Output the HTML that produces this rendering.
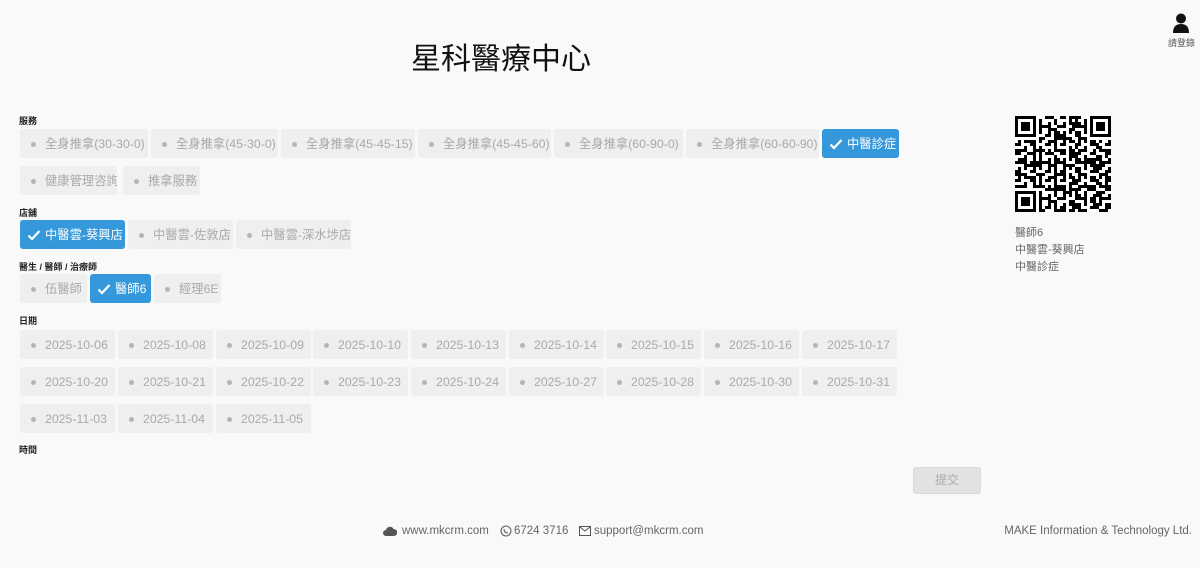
<!DOCTYPE html>
<html><head><meta charset="utf-8"><style>
*{margin:0;padding:0;box-sizing:border-box}
body{width:1200px;height:568px;background:#f9f9f9;font-family:"Liberation Sans","Noto Sans CJK TC",sans-serif;position:relative;overflow:hidden}
.c{position:absolute;height:29px;background:#efefef;border-radius:3px;color:#a9a9a9;font-size:12.3px;line-height:31px;padding-left:25px;white-space:nowrap;overflow:hidden}
.c::before{content:"";position:absolute;left:11px;top:13px;width:5px;height:5px;border-radius:50%;background:#b5b5b5}
.c.s{background:#3498db;color:#fff}
.c.s::before{display:none}
.c.s svg{position:absolute;left:7px;top:9px}
.l{position:absolute;left:19px;font-size:9px;color:#222;font-weight:bold}
.ft{position:absolute;top:525px;font-size:11.5px;color:#666}
</style></head><body>
<div style="position:absolute;left:411px;top:34px;font-size:30px;color:#111;font-family:'Noto Sans CJK TC',sans-serif">星科醫療中心</div>
<svg style="position:absolute;left:1172px;top:13px" width="18" height="20" viewBox="0 0 18 20"><circle cx="9" cy="5.5" r="5" fill="#111"/><path d="M1 20 Q1 11 9 11 Q17 11 17 20Z" fill="#111"/></svg>
<div style="position:absolute;left:1168px;top:36px;font-size:9px;color:#555">請登錄</div>

<div class="l" style="top:114px">服務</div>
<div class="c" style="left:20px;top:129px;width:128px">全身推拿(30-30-0)</div>
<div class="c" style="left:151px;top:129px;width:127px">全身推拿(45-30-0)</div>
<div class="c" style="left:281px;top:129px;width:134px">全身推拿(45-45-15)</div>
<div class="c" style="left:418px;top:129px;width:133px">全身推拿(45-45-60)</div>
<div class="c" style="left:554px;top:129px;width:129px">全身推拿(60-90-0)</div>
<div class="c" style="left:686px;top:129px;width:133px">全身推拿(60-60-90)</div>
<div class="c s" style="left:822px;top:129px;width:77px"><svg width="14" height="12" viewBox="0 0 14 12"><path d="M1.5 6.5l3.5 3.5 7.5-8" stroke="#fff" stroke-width="2.2" fill="none"/></svg>中醫診症</div>
<div class="c" style="left:20px;top:166px;width:97px">健康管理咨詢</div>
<div class="c" style="left:123px;top:166px;width:77px">推拿服務</div>

<div class="l" style="top:206px">店舖</div>
<div class="c s" style="left:20px;top:220px;width:105px"><svg width="14" height="12" viewBox="0 0 14 12"><path d="M1.5 6.5l3.5 3.5 7.5-8" stroke="#fff" stroke-width="2.2" fill="none"/></svg>中醫雲-葵興店</div>
<div class="c" style="left:128px;top:220px;width:105px">中醫雲-佐敦店</div>
<div class="c" style="left:236px;top:220px;width:115px">中醫雲-深水埗店</div>

<div class="l" style="top:260px">醫生 / 醫師 / 治療師</div>
<div class="c" style="left:20px;top:274px;width:67px">伍醫師</div>
<div class="c s" style="left:90px;top:274px;width:61px"><svg width="14" height="12" viewBox="0 0 14 12"><path d="M1.5 6.5l3.5 3.5 7.5-8" stroke="#fff" stroke-width="2.2" fill="none"/></svg>醫師6</div>
<div class="c" style="left:154px;top:274px;width:67px">經理6E</div>

<div class="l" style="top:314px">日期</div>
<div class="c" style="left:20px;top:330px;width:95px">2025-10-06</div>
<div class="c" style="left:118px;top:330px;width:95px">2025-10-08</div>
<div class="c" style="left:216px;top:330px;width:95px">2025-10-09</div>
<div class="c" style="left:313px;top:330px;width:95px">2025-10-10</div>
<div class="c" style="left:411px;top:330px;width:95px">2025-10-13</div>
<div class="c" style="left:509px;top:330px;width:95px">2025-10-14</div>
<div class="c" style="left:606px;top:330px;width:95px">2025-10-15</div>
<div class="c" style="left:704px;top:330px;width:95px">2025-10-16</div>
<div class="c" style="left:802px;top:330px;width:95px">2025-10-17</div>
<div class="c" style="left:20px;top:367px;width:95px">2025-10-20</div>
<div class="c" style="left:118px;top:367px;width:95px">2025-10-21</div>
<div class="c" style="left:216px;top:367px;width:95px">2025-10-22</div>
<div class="c" style="left:313px;top:367px;width:95px">2025-10-23</div>
<div class="c" style="left:411px;top:367px;width:95px">2025-10-24</div>
<div class="c" style="left:509px;top:367px;width:95px">2025-10-27</div>
<div class="c" style="left:606px;top:367px;width:95px">2025-10-28</div>
<div class="c" style="left:704px;top:367px;width:95px">2025-10-30</div>
<div class="c" style="left:802px;top:367px;width:95px">2025-10-31</div>
<div class="c" style="left:20px;top:404px;width:95px">2025-11-03</div>
<div class="c" style="left:118px;top:404px;width:95px">2025-11-04</div>
<div class="c" style="left:216px;top:404px;width:95px">2025-11-05</div>

<div class="l" style="top:443px">時間</div>
<div style="position:absolute;left:913px;top:467px;width:68px;height:27px;background:#e2e2e2;border:1px solid #d9d9d9;border-radius:3px;color:#aaa;font-size:12px;text-align:center;line-height:25px">提交</div>

<svg style="position:absolute;left:1015px;top:116px" width="96" height="96" viewBox="0 0 32 32" shape-rendering="crispEdges">
<defs>
<pattern id="p1" width="5" height="3" patternUnits="userSpaceOnUse"><rect width="2" height="1" fill="#000"/><rect x="3" y="1" width="1" height="2" fill="#000"/><rect x="1" y="2" width="1" height="1" fill="#000"/></pattern>
<pattern id="p2" width="7" height="4" patternUnits="userSpaceOnUse"><rect x="4" width="2" height="1" fill="#000"/><rect x="0" y="3" width="3" height="1" fill="#000"/><rect x="6" y="1" width="1" height="2" fill="#000"/></pattern>
<pattern id="p3" width="11" height="9" patternUnits="userSpaceOnUse"><rect x="2" y="5" width="2" height="2" fill="#000"/><rect x="8" y="2" width="1" height="3" fill="#000"/><rect x="5" y="7" width="3" height="1" fill="#000"/></pattern>
</defs>
<rect width="32" height="32" fill="#fff"/>
<rect width="32" height="32" fill="url(#p1)"/>
<rect width="32" height="32" fill="url(#p2)"/>
<rect width="32" height="32" fill="url(#p3)"/>
<g><rect x="0" y="0" width="8" height="8" fill="#fff"/><rect x="0" y="0" width="7" height="7" fill="#000"/><rect x="1" y="1" width="5" height="5" fill="#fff"/><rect x="2" y="2" width="3" height="3" fill="#000"/></g>
<g><rect x="24" y="0" width="8" height="8" fill="#fff"/><rect x="25" y="0" width="7" height="7" fill="#000"/><rect x="26" y="1" width="5" height="5" fill="#fff"/><rect x="27" y="2" width="3" height="3" fill="#000"/></g>
<g><rect x="0" y="24" width="8" height="8" fill="#fff"/><rect x="0" y="25" width="7" height="7" fill="#000"/><rect x="1" y="26" width="5" height="5" fill="#fff"/><rect x="2" y="27" width="3" height="3" fill="#000"/></g>
</svg>
<div style="position:absolute;left:1015px;top:225px;font-size:11px;color:#666;line-height:17px">醫師6<br>中醫雲-葵興店<br>中醫診症</div>

<svg style="position:absolute;left:383px;top:526px" width="14" height="10" viewBox="0 0 14 10"><path d="M3 10a3 3 0 0 1 0-6 4 4 0 0 1 7.5-1A3.5 3.5 0 0 1 11 10z" fill="#555"/></svg>
<div class="ft" style="left:402px">www.mkcrm.com</div>
<svg style="position:absolute;left:500px;top:525px" width="12" height="12" viewBox="0 0 12 12"><circle cx="6" cy="6" r="5" stroke="#555" fill="none"/><path d="M4 4q0 4 4 4" stroke="#555" fill="none"/></svg>
<div class="ft" style="left:514px">6724 3716</div>
<svg style="position:absolute;left:579px;top:526px" width="12" height="10" viewBox="0 0 12 10"><rect x=".5" y=".5" width="11" height="9" stroke="#555" fill="none"/><path d="M1 1l5 4 5-4" stroke="#555" fill="none"/></svg>
<div class="ft" style="left:594px">support@mkcrm.com</div>
<div class="ft" style="right:8px">MAKE Information &amp; Technology Ltd.</div>
</body></html>
